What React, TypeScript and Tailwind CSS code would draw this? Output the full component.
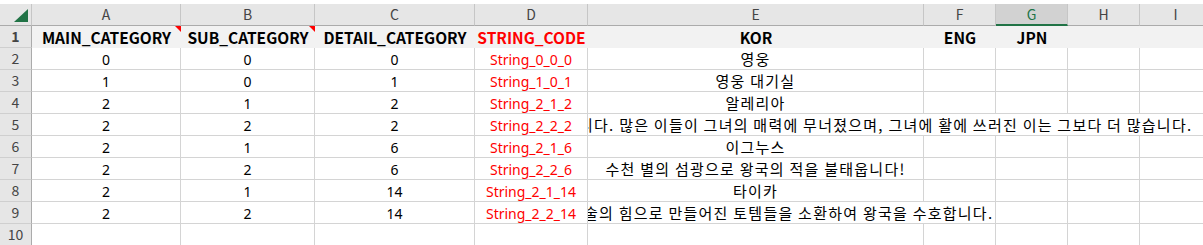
import React from 'react';

const font = "font-['Noto_Sans_CJK_KR','Noto_Sans',sans-serif]";
const latin = "font-['Noto_Sans','Noto_Sans_CJK_KR',sans-serif]";
const cols = 'grid grid-cols-[32px_149px_134px_160px_113px_336px_72px_72px_72px_72px]';
const letters = ['A', 'B', 'C', 'D', 'E', 'F', 'G', 'H', 'I'];

// shift: text overflows into the next columns and is cut off by column D on the left
type Row = { a: number; b: number; c: number; code: string; kor: string; shift?: string };

const rows: Row[] = [
  { a: 0, b: 0, c: 0, code: 'String_0_0_0', kor: '영웅' },
  { a: 1, b: 0, c: 1, code: 'String_1_0_1', kor: '영웅 대기실' },
  { a: 2, b: 1, c: 2, code: 'String_2_1_2', kor: '알레리아' },
  {
    a: 2,
    b: 2,
    c: 2,
    code: 'String_2_2_2',
    kor: '니다. 많은 이들이 그녀의 매력에 무너졌으며, 그녀에 활에 쓰러진 이는 그보다 더 많습니다.',
    shift: 'left-[-9px]',
  },
  { a: 2, b: 1, c: 6, code: 'String_2_1_6', kor: '이그누스' },
  { a: 2, b: 2, c: 6, code: 'String_2_2_6', kor: '수천 별의 섬광으로 왕국의 적을 불태웁니다!' },
  { a: 2, b: 1, c: 14, code: 'String_2_1_14', kor: '타이카' },
  {
    a: 2,
    b: 2,
    c: 14,
    code: 'String_2_2_14',
    kor: '술의 힘으로 만들어진 토템들을 소환하여 왕국을 수호합니다.',
    shift: 'left-[-4px]',
  },
];

function Cell({ children, className = '' }: { children?: React.ReactNode; className?: string }) {
  return (
    <div className={`flex h-[22px] items-center justify-center border-r border-b border-[#d4d4d4] pt-[2px] text-[14px] whitespace-nowrap ${latin} ${className}`}>
      {children}
    </div>
  );
}

function RowNum({ n }: { n: number }) {
  return (
    <div className="flex h-[22px] items-center justify-center border-r border-b border-r-[#ababab] border-b-[#cfcfcf] bg-[#e6e6e6] text-[14px] text-[#444]">
      {n}
    </div>
  );
}

function CommentMark() {
  return (
    <svg className="absolute top-0 right-0" width="6" height="6" viewBox="0 0 6 6">
      <polygon points="0,0 6,0 6,6" fill="#ff0000" />
    </svg>
  );
}

export default function App() {
  return (
    <div className={`h-[245px] w-[1203px] overflow-hidden bg-white text-black ${font}`}>
      <div className="h-1" />

      {/* column letters */}
      <div className={cols}>
        <div className="relative h-[22px] border-r border-b border-r-[#c6c6c6] border-b-[#ababab] bg-[#e6e6e6]">
          <svg className="absolute top-[5px] left-[14px]" width="14" height="13" viewBox="0 0 14 13">
            <polygon points="14,0 14,13 0,13" fill="#217346" />
          </svg>
        </div>
        {letters.map((l) => (
          <div
            key={l}
            className={`flex h-[22px] items-center justify-center border-r border-r-[#c6c6c6] text-[14px] ${
              l === 'G'
                ? 'border-b-2 border-b-[#217346] bg-[#d2d2d2] text-[#217346]'
                : 'border-b border-b-[#ababab] bg-[#e6e6e6] text-[#444]'
            }`}
          >
            {l}
          </div>
        ))}
      </div>

      {/* header row */}
      <div className={`${cols} text-[15.5px] font-bold`}>
        <RowNum n={1} />
        <div className="relative flex h-[22px] items-center justify-center bg-[#f2f2f2] pt-px">
          MAIN_CATEGORY
          <CommentMark />
        </div>
        <div className="relative flex h-[22px] items-center justify-center bg-[#f2f2f2] pt-px">
          SUB_CATEGORY
          <CommentMark />
        </div>
        <div className="flex h-[22px] items-center justify-center bg-[#f2f2f2] pt-px">DETAIL_CATEGORY</div>
        <div className="flex h-[22px] items-center justify-center bg-[#f2f2f2] pt-px text-[#ff0000]">STRING_CODE</div>
        <div className="flex h-[22px] items-center justify-center bg-[#f2f2f2] pt-px">KOR</div>
        <div className="flex h-[22px] items-center justify-center bg-[#f2f2f2] pt-px">ENG</div>
        <div className="flex h-[22px] items-center justify-center bg-[#f2f2f2] pt-px">JPN</div>
        <div className="h-[22px] bg-[#f2f2f2]" />
        <div className="h-[22px] bg-[#f2f2f2]" />
      </div>

      {/* data rows */}
      {rows.map((r, i) => (
        <div key={r.code} className={cols}>
          <RowNum n={i + 2} />
          <Cell>{r.a}</Cell>
          <Cell>{r.b}</Cell>
          <Cell>{r.c}</Cell>
          <Cell className="text-[#ff0000]">{r.code}</Cell>
          <div className="relative h-[22px] border-r border-b border-[#d4d4d4] [clip-path:inset(0_-2000px_0_0)]">
            <span
              className={`absolute top-0 bottom-0 flex items-center bg-white pt-px text-[15px] tracking-[1.25px] whitespace-nowrap ${
                r.shift ?? 'left-1/2 -translate-x-1/2'
              }`}
            >
              {r.kor}
            </span>
          </div>
          <Cell />
          <Cell />
          <Cell />
          <Cell />
        </div>
      ))}

      <div className={cols}>
        <RowNum n={10} />
        <Cell />
        <Cell />
        <Cell />
        <Cell />
        <Cell />
        <Cell />
        <Cell />
        <Cell />
        <Cell />
      </div>
    </div>
  );
}
